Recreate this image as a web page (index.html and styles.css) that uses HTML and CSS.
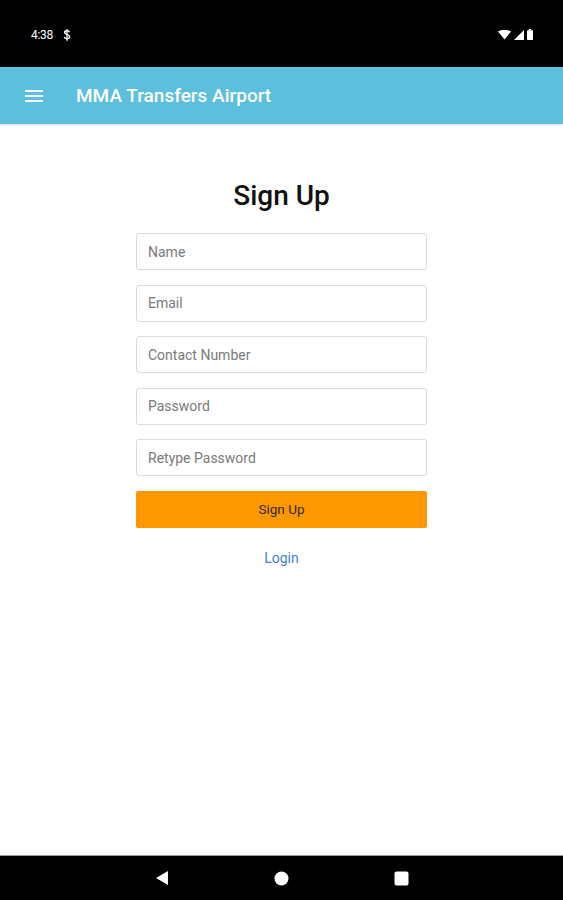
FILE: index.html
```html
<!DOCTYPE html>
<html lang="en">
<head>
    <meta charset="UTF-8">
    <meta name="viewport" content="width=device-width, initial-scale=1.0">
    <title>Sign Up - MMA Transfers Airport</title>
    <link rel="stylesheet" href="styles.css">
</head>
<body>
    <div class="status-bar">
        <div class="status-left">
            <span class="time">4:38</span>
            <svg class="status-dollar" width="8" height="12" viewBox="0 0 8 12">
                <path d="M6.5 3.2C6.2 2.3 5.3 1.8 4 1.8 2.6 1.8 1.6 2.5 1.6 3.5c0 2.4 5 1.3 5 4.2 0 1.2-1.1 2-2.6 2-1.5 0-2.5-.7-2.7-1.8" fill="none" stroke="#fff" stroke-width="1.4"/>
                <path d="M4 0.3v11.4" stroke="#fff" stroke-width="1.3"/>
            </svg>
        </div>
        <div class="status-right">
            <svg width="13" height="10" viewBox="0 0 13 10"><path d="M0 1.5Q6.5-2 13 1.5L6.5 9.5Z" fill="#fff"/></svg>
            <svg width="10" height="10" viewBox="0 0 10 10"><path d="M0 10L10 0V10Z" fill="#fff"/></svg>
            <svg width="6" height="11" viewBox="0 0 6 11"><rect x="0" y="1.2" width="6" height="9.8" rx="0.8" fill="#fff"/><rect x="1.8" y="0" width="2.4" height="1.6" fill="#fff"/></svg>
        </div>
    </div>

    <div class="app-bar">
        <svg class="menu-icon" width="18" height="12" viewBox="0 0 18 12">
            <rect y="0" width="18" height="2" fill="#fff"/>
            <rect y="5" width="18" height="2" fill="#fff"/>
            <rect y="10" width="18" height="2" fill="#fff"/>
        </svg>
        <h1>MMA Transfers Airport</h1>
    </div>

    <div class="content">
        <div class="signup-form">
            <h2>Sign Up</h2>
            <form id="signup-form">
                <input type="text" placeholder="Name">
                <input type="email" placeholder="Email">
                <input type="tel" placeholder="Contact Number">
                <input type="password" placeholder="Password">
                <input type="password" placeholder="Retype Password">
                <button type="submit">Sign Up</button>
            </form>
            <a class="login-link" href="#">Login</a>
        </div>
    </div>

    <div class="nav-bar">
        <svg width="14" height="16" viewBox="0 0 14 16"><path d="M13 1V15L1 8Z" fill="#fff"/></svg>
        <svg width="15" height="15" viewBox="0 0 15 15"><circle cx="7.5" cy="7.5" r="7" fill="#fff"/></svg>
        <svg width="15" height="15" viewBox="0 0 15 15"><rect x="0.5" y="0.5" width="14" height="14" rx="2" fill="#fff"/></svg>
    </div>
</body>
</html>
```

FILE: styles.css
```css
body {
    font-family: Roboto, "Liberation Sans", sans-serif;
    background-color: #FFFFFF;
    margin: 0;
    padding: 0;
    height: 900px;
    display: flex;
    flex-direction: column;
}
.status-bar {
    background-color: #000000;
    height: 67px;
    display: flex;
    align-items: center;
    justify-content: space-between;
    padding: 2px 30px 0 31px;
    box-sizing: border-box;
    color: #FFFFFF;
}
.status-left {
    display: flex;
    align-items: center;
    gap: 10px;
}
.status-left .time {
    font-size: 12px;
    letter-spacing: -0.3px;
}
.status-right {
    display: flex;
    align-items: center;
    gap: 3px;
}
.app-bar {
    background-color: #5BBFDD; /* Light blue */
    height: 57px;
    display: flex;
    align-items: center;
    padding: 0 0 0 25px;
    box-shadow: 0 1px 2px rgba(0, 0, 0, 0.15);
}
.app-bar h1 {
    margin: 0 0 0 33px;
    color: #FFFFFF;
    font-size: 19px;
    font-weight: 500;
}
.content {
    flex: 1;
    display: flex;
    justify-content: center;
}
.signup-form {
    width: 291px;
    padding-top: 55px;
    display: flex;
    flex-direction: column;
    align-items: center;
}
.signup-form h2 {
    margin: 0 0 21px;
    font-size: 28px;
    font-weight: 500;
    color: #111111;
}
.signup-form form {
    width: 100%;
    display: flex;
    flex-direction: column;
    gap: 14.5px;
}
.signup-form input {
    height: 37px;
    box-sizing: border-box;
    border: 1px solid #DCDCDC;
    border-radius: 3px;
    padding: 0 11px;
    font-family: Roboto, "Liberation Sans", sans-serif;
    font-size: 14px;
    color: #333333;
    outline: none;
}
.signup-form input::placeholder {
    color: #7A7A7A;
}
.signup-form button {
    height: 37px;
    background-color: #FF9800; /* Orange */
    color: #2B2B2B;
    border: none;
    border-radius: 2px;
    font-family: Roboto, "Liberation Sans", sans-serif;
    font-size: 13.5px;
    cursor: pointer;
}
.login-link {
    margin-top: 22px;
    color: #3F7FD0;
    font-size: 14px;
    text-decoration: none;
}
.nav-bar {
    background-color: #000000;
    height: 44px;
    border-top: 1px solid #9A9A9A;
    display: flex;
    align-items: center;
    justify-content: center;
    gap: 105px;
}
```
